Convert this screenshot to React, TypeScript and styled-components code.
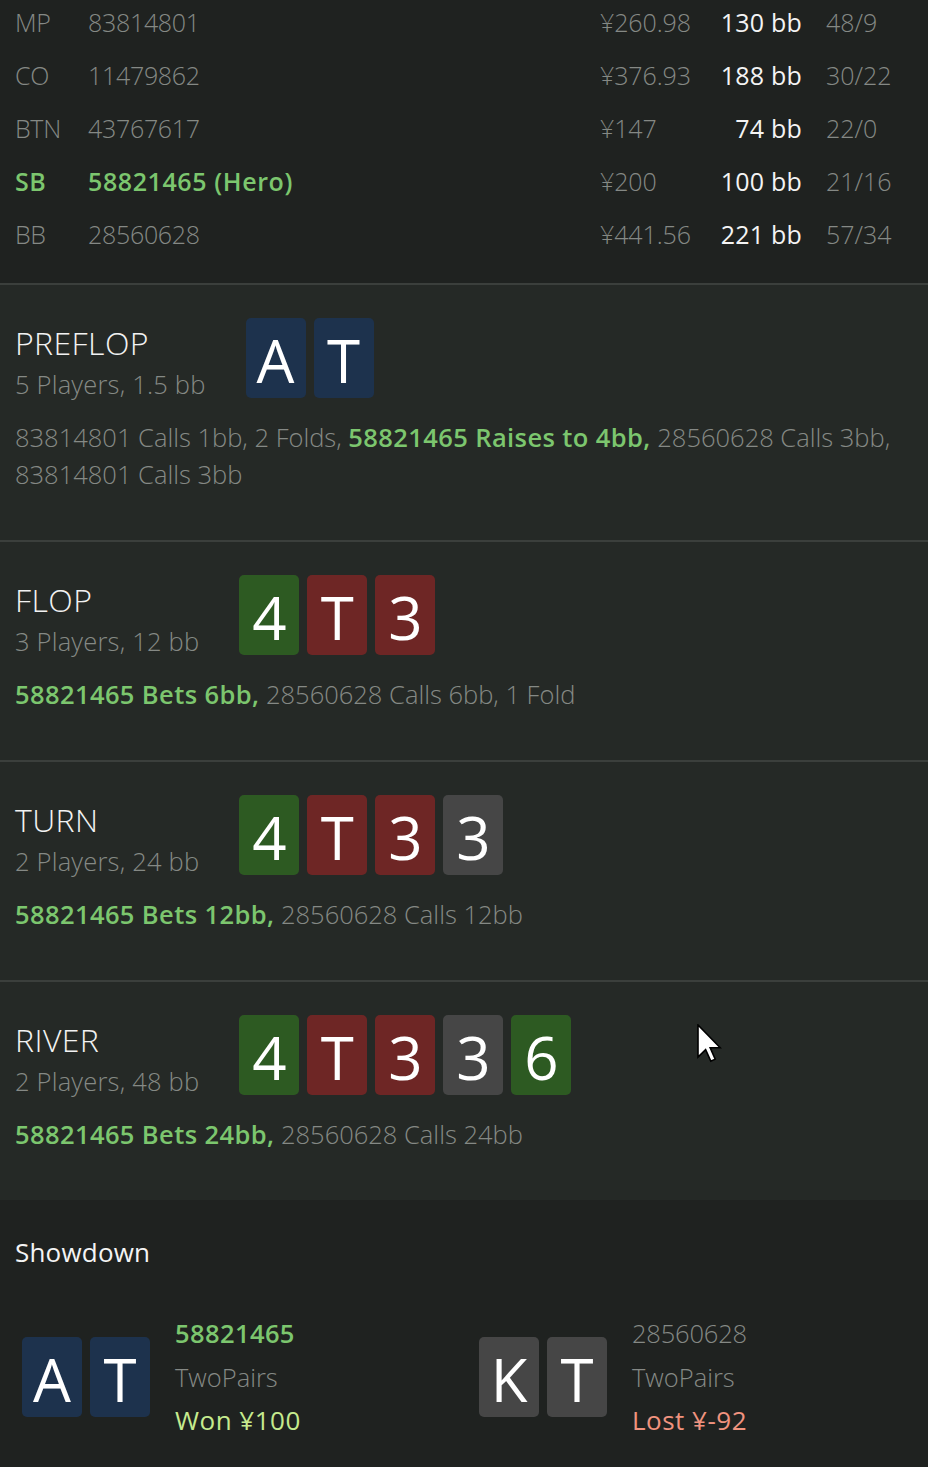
import styled, { createGlobalStyle } from "styled-components";

const GlobalStyle = createGlobalStyle`
  html, body {
    margin: 0;
    padding: 0;
    background: #1f2220;
  }

  body {
    font-family: "Open Sans", "Noto Sans", "Liberation Sans", sans-serif;
    -webkit-font-smoothing: antialiased;
  }
`;

const Page = styled.div`
  position: relative;
  width: 928px;
  overflow: hidden;
`;

const PlayersTable = styled.div`
  display: grid;
  row-gap: 9px;
  padding: 0 0 27px 15px;
  background: #1f2220;
  border-bottom: 2px solid #3b3f3c;
`;

const PlayerRow = styled.div<{ $hero?: boolean }>`
  display: grid;
  grid-template-columns: 73px 1fr 102px 100px 126px;
  height: 44px;
  line-height: 44px;
  font-size: 25px;
  font-weight: ${(p) => (p.$hero ? 600 : 300)};
  letter-spacing: ${(p) => (p.$hero ? "0.6px" : "-0.3px")};
  color: ${(p) => (p.$hero ? "#7cc66e" : "#858985")};
  white-space: nowrap;
`;

const Stack = styled.span`
  color: #858985;
  font-weight: 300;
  letter-spacing: -0.1px;
`;

const BigBlinds = styled.span`
  text-align: right;
  color: #f4f4f4;
  font-weight: 400;
  letter-spacing: 0.2px;
`;

const Ratio = styled.span`
  padding-left: 24px;
  color: #858985;
  font-weight: 300;
  letter-spacing: 0;
`;

const Street = styled.section<{ $last?: boolean }>`
  background: #252926;
  padding: 33px 15px 47px;
  border-bottom: ${(p) => (p.$last ? "none" : "2px solid #3b3f3c")};
`;

const StreetHeader = styled.div`
  display: flex;
  align-items: flex-start;
  gap: 40px;
`;

const StreetInfo = styled.div`
  padding-top: 5px;
`;

const StreetTitle = styled.div`
  font-size: 32px;
  line-height: 40px;
  font-weight: 300;
  letter-spacing: 0.4px;
  color: #f2f2f2;
`;

const StreetSub = styled.div`
  font-size: 25.5px;
  line-height: 42px;
  font-weight: 300;
  letter-spacing: 0.2px;
  color: #858985;
`;

const Cards = styled.div`
  display: flex;
  gap: 8px;
`;

const cardColors = {
  blue: "#1d324d",
  green: "#2d5a22",
  red: "#6e2625",
  gray: "#464646",
};

type CardColor = keyof typeof cardColors;

const Card = styled.div<{ $color: CardColor }>`
  width: 60px;
  height: 80px;
  border-radius: 5px;
  background: ${(p) => cardColors[p.$color]};
  display: flex;
  align-items: center;
  justify-content: center;
  font-size: 60px;
  line-height: 1;
  font-weight: 400;
  color: #ffffff;
  padding-top: 4px;
  box-sizing: border-box;
`;

const Actions = styled.p`
  margin: 14px 0 0;
  font-size: 25.5px;
  line-height: 37px;
  font-weight: 300;
  letter-spacing: 0;
  color: #858985;
`;

const HeroAction = styled.span`
  font-weight: 600;
  letter-spacing: 0.4px;
  color: #7cc66e;
`;

const Showdown = styled.section`
  background: #1f2220;
  padding: 32px 0 40px;
`;

const ShowdownTitle = styled.div`
  padding-left: 15px;
  font-size: 26px;
  line-height: 40px;
  font-weight: 400;
  letter-spacing: 0.2px;
  color: #f4f4f4;
`;

const Hands = styled.div`
  display: grid;
  grid-template-columns: 457px 1fr;
  padding-left: 22px;
  margin-top: 40px;
`;

const Hand = styled.div`
  display: flex;
  align-items: center;
  gap: 25px;
`;

const HandInfo = styled.div`
  display: flex;
  flex-direction: column;
  font-size: 25.5px;
  line-height: 43.5px;
`;

const HandName = styled.span<{ $hero?: boolean }>`
  font-weight: ${(p) => (p.$hero ? 600 : 300)};
  letter-spacing: ${(p) => (p.$hero ? "0.4px" : "-0.2px")};
  color: ${(p) => (p.$hero ? "#7cc66e" : "#858985")};
`;

const HandRank = styled.span`
  font-weight: 300;
  letter-spacing: 0;
  color: #858985;
`;

const HandResult = styled.span<{ $won?: boolean }>`
  font-size: 26px;
  font-weight: 400;
  letter-spacing: 0.5px;
  color: ${(p) => (p.$won ? "#c6eb8e" : "#f0937f")};
`;

const Cursor = styled.svg`
  position: absolute;
  left: 697px;
  top: 1024px;
  width: 25px;
  height: 39px;
  pointer-events: none;
`;

const players = [
  { pos: "MP", name: "83814801", stack: "¥260.98", bb: "130 bb", ratio: "48/9" },
  { pos: "CO", name: "11479862", stack: "¥376.93", bb: "188 bb", ratio: "30/22" },
  { pos: "BTN", name: "43767617", stack: "¥147", bb: "74 bb", ratio: "22/0" },
  { pos: "SB", name: "58821465 (Hero)", stack: "¥200", bb: "100 bb", ratio: "21/16", hero: true },
  { pos: "BB", name: "28560628", stack: "¥441.56", bb: "221 bb", ratio: "57/34" },
];

type Part = { text: string; hero?: boolean };

const streets: {
  title: string;
  sub: string;
  cards: [string, CardColor][];
  actions: Part[];
}[] = [
  {
    title: "PREFLOP",
    sub: "5 Players, 1.5 bb",
    cards: [["A", "blue"], ["T", "blue"]],
    actions: [
      { text: "83814801 Calls 1bb, 2 Folds, " },
      { text: "58821465 Raises to 4bb,", hero: true },
      { text: " 28560628 Calls 3bb, " },
      { text: "83814801 Calls 3bb" },
    ],
  },
  {
    title: "FLOP",
    sub: "3 Players, 12 bb",
    cards: [["4", "green"], ["T", "red"], ["3", "red"]],
    actions: [
      { text: "58821465 Bets 6bb,", hero: true },
      { text: " 28560628 Calls 6bb, 1 Fold" },
    ],
  },
  {
    title: "TURN",
    sub: "2 Players, 24 bb",
    cards: [["4", "green"], ["T", "red"], ["3", "red"], ["3", "gray"]],
    actions: [
      { text: "58821465 Bets 12bb,", hero: true },
      { text: " 28560628 Calls 12bb" },
    ],
  },
  {
    title: "RIVER",
    sub: "2 Players, 48 bb",
    cards: [["4", "green"], ["T", "red"], ["3", "red"], ["3", "gray"], ["6", "green"]],
    actions: [
      { text: "58821465 Bets 24bb,", hero: true },
      { text: " 28560628 Calls 24bb" },
    ],
  },
];

const hands: {
  cards: [string, CardColor][];
  name: string;
  rank: string;
  result: string;
  hero?: boolean;
}[] = [
  { cards: [["A", "blue"], ["T", "blue"]], name: "58821465", rank: "TwoPairs", result: "Won ¥100", hero: true },
  { cards: [["K", "gray"], ["T", "gray"]], name: "28560628", rank: "TwoPairs", result: "Lost ¥-92" },
];

export default function App() {
  return (
    <Page>
      <GlobalStyle />
      <PlayersTable>
        {players.map((p) => (
          <PlayerRow key={p.pos} $hero={p.hero}>
            <span>{p.pos}</span>
            <span>{p.name}</span>
            <Stack>{p.stack}</Stack>
            <BigBlinds>{p.bb}</BigBlinds>
            <Ratio>{p.ratio}</Ratio>
          </PlayerRow>
        ))}
      </PlayersTable>

      {streets.map((s, i) => (
        <Street key={s.title} $last={i === streets.length - 1}>
          <StreetHeader>
            <StreetInfo>
              <StreetTitle>{s.title}</StreetTitle>
              <StreetSub>{s.sub}</StreetSub>
            </StreetInfo>
            <Cards>
              {s.cards.map(([rank, color], ci) => (
                <Card key={ci} $color={color}>
                  {rank}
                </Card>
              ))}
            </Cards>
          </StreetHeader>
          <Actions>
            {s.actions.map((a, ai) =>
              a.hero ? <HeroAction key={ai}>{a.text}</HeroAction> : <span key={ai}>{a.text}</span>
            )}
          </Actions>
        </Street>
      ))}

      <Showdown>
        <ShowdownTitle>Showdown</ShowdownTitle>
        <Hands>
          {hands.map((h) => (
            <Hand key={h.name}>
              <Cards>
                {h.cards.map(([rank, color], ci) => (
                  <Card key={ci} $color={color}>
                    {rank}
                  </Card>
                ))}
              </Cards>
              <HandInfo>
                <HandName $hero={h.hero}>{h.name}</HandName>
                <HandRank>{h.rank}</HandRank>
                <HandResult $won={h.hero}>{h.result}</HandResult>
              </HandInfo>
            </Hand>
          ))}
        </Hands>
      </Showdown>

      <Cursor viewBox="0 0 12.5 19.5">
        <path
          d="M0.5 0.5 L0.5 16.5 L4.3 12.8 L6.9 18.6 L9.1 17.6 L6.6 11.9 L11.6 11.9 Z"
          fill="#ffffff"
          stroke="#000000"
          strokeWidth="0.8"
          strokeLinejoin="miter"
        />
      </Cursor>
    </Page>
  );
}
